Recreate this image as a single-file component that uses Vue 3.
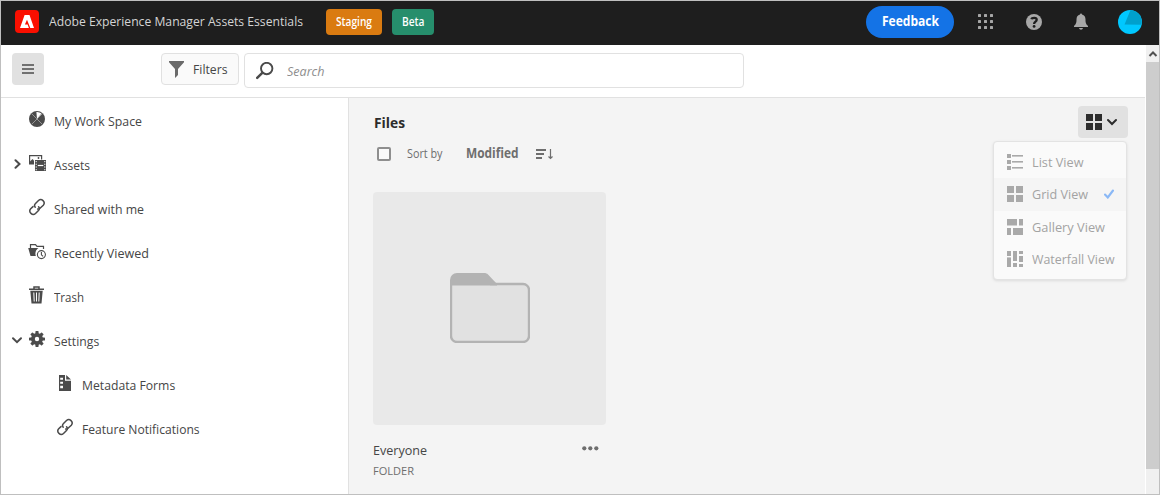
<script setup>
const nav = [
  { label: 'My Work Space', width: 88, icon: 'pie' },
  { label: 'Assets', width: 36, icon: 'assets', chevron: 'right' },
  { label: 'Shared with me', width: 90, icon: 'link' },
  { label: 'Recently Viewed', width: 95, icon: 'recent' },
  { label: 'Trash', width: 30, icon: 'trash' },
  { label: 'Settings', width: 45.2, icon: 'gear', chevron: 'down' },
  { label: 'Metadata Forms', width: 93.2, icon: 'form', child: true },
  { label: 'Feature Notifications', width: 117.6, icon: 'link', child: true },
]
const views = [
  { label: 'List View', width: 51.5, rects: [[0,0,4,4],[0,6,4,4],[0,12,4,4],[5,1,11,1.6],[5,7,11,1.6],[5,13,11,1.6]] },
  { label: 'Grid View', width: 56, rects: [[0,0,7,7],[9,0,7,7],[0,9,7,7],[9,9,7,7]], selected: true },
  { label: 'Gallery View', width: 73, rects: [[0,0,10,6.5],[12,0,4,6.5],[0,9,4,7],[6,9,10,7]] },
  { label: 'Waterfall View', width: 82.5, rects: [[0,0,4,5],[0,6.4,4,9.6],[6,0,4,10],[6,12,4,4],[12,0,4,3],[12,5,4,6],[12,13,4,3]] },
]
const dots = [0, 6, 12].flatMap(y => [0, 6, 12].map(x => [x, y]))
const teeth = [0, 45, 90, 135, 180, 225, 270, 315]

// Condenses a label horizontally so that it takes the given width.
const vFit = {
  mounted(el, { value }) {
    const natural = el.getBoundingClientRect().width
    el.style.display = 'inline-block'
    el.style.transformOrigin = '0 50%'
    el.style.transform = `scaleX(${value / natural})`
    el.style.marginRight = `${value - natural}px`
  },
}
</script>

<template>
  <div class="window">
    <header class="topbar">
      <svg class="logo" width="24" height="24" viewBox="0 0 24 24">
        <rect width="24" height="23" rx="4" fill="#fa0f00" />
        <path d="M9.600 5h4.900L19 18h-3.700L12 9.700 9.900 14.500h2.700L13.900 18H5z" fill="#fff" />
      </svg>
      <div class="product"><span v-fit="254">Adobe Experience Manager Assets Essentials</span></div>
      <div class="badge staging"><span v-fit="36">Staging</span></div>
      <div class="badge beta"><span v-fit="22.5">Beta</span></div>
      <button class="feedback"><span v-fit="57">Feedback</span></button>
      <svg class="apps" width="15" height="15"><rect v-for="(d, i) in dots" :key="i" :x="d[0]" :y="d[1]" width="3" height="3" rx=".5" fill="#a6a6a6" /></svg>
      <svg class="help" width="16" height="16" viewBox="0 0 16 16">
        <circle cx="8" cy="8" r="8" fill="#a8a8a8" />
        <path d="M5.500 5.300C5.900 3.500 10.700 3.100 10.700 5.800 10.700 7.700 8.100 7.700 8.100 10" fill="none" stroke="#1e1e1e" stroke-width="2.300" />
        <circle cx="8.100" cy="12.400" r="1.400" fill="#1e1e1e" />
      </svg>
      <svg class="bell" width="14" height="17" viewBox="0 0 14 17">
        <path d="M6 1.500a1 1 0 0 1 2 0C10.500 2 11.500 4 11.500 6.500c0 3.500.5 4.500 2.500 6.500v1H0v-1c2-2 2.500-3 2.500-6.500C2.500 4 3.500 2 6 1.500zM5 15h4c-.3 1-1 1.700-2 1.700S5.300 16 5 15z" fill="#a8a8a8" />
      </svg>
      <svg class="avatar" width="24" height="24" viewBox="0 0 24 24">
        <circle cx="12" cy="12" r="12" fill="#00c8ff" />
        <path d="M12.500 0A12 12 0 0 1 23.500 14.700L6.500 14.500z" fill="#00a0cc" />
      </svg>
    </header>

    <div class="body">
      <div class="page">
        <div class="toolbar">
          <button class="hamburger"><svg width="12" height="10"><path d="M0 1h12M0 5h12M0 9h12" stroke="#707070" stroke-width="1.800" /></svg></button>
          <button class="filters">
            <svg width="15" height="17" viewBox="0 0 15 17"><path d="M0 0h15v1.200L9 8v6l-3 3V8L0 1.200z" fill="#6a6a6a" /></svg>
            <span v-fit="34.5">Filters</span>
          </button>
          <div class="search">
            <svg width="18" height="18" viewBox="0 0 18 18"><g fill="none" stroke="#4a4a4a"><circle cx="10.700" cy="6.500" r="5.700" stroke-width="1.900" /><path d="M6.300 10.800 1.200 15.800" stroke-width="2.500" stroke-linecap="round" /></g></svg>
            <span v-fit="37.5">Search</span>
          </div>
        </div>

        <div class="columns">
          <nav class="sidebar">
            <div v-for="item in nav" :key="item.label" class="item" :class="{ child: item.child }">
              <div class="chevron">
                <svg v-if="item.chevron === 'right'" width="12" height="12"><path d="M4.500 1.200 8.500 5 4.500 8.800" fill="none" stroke="#4b4b4b" stroke-width="2" stroke-linecap="round" /></svg>
                <svg v-if="item.chevron === 'down'" width="12" height="12"><path d="M2 3.300 6 7.100 10 3.300" fill="none" stroke="#4b4b4b" stroke-width="2" stroke-linecap="round" /></svg>
              </div>
              <svg class="icon" width="18" height="18" viewBox="0 0 18 18">
                <template v-if="item.icon === 'pie'">
                  <circle cx="9" cy="9" r="8" fill="#4b4b4b" />
                  <path d="M9 9 8.400 2A7 7 0 0 1 13.500 3.500z" fill="#fff" />
                  <path d="M9 9 3.500 3.500M9 9 3.500 14.500M9 9l5.500 5.500M9 9l5.500-5.500" stroke="#aaa" stroke-width=".8" />
                </template>
                <template v-if="item.icon === 'assets'">
                  <path d="M1.600 10V1.600h12v4" fill="none" stroke="#4b4b4b" stroke-width="1.200" />
                  <path d="M1 10.500V8.500L4.500 5 6 6.500v4z" fill="#4b4b4b" /><circle cx="10.500" cy="4" r=".9" fill="#4b4b4b" />
                  <rect x="7" y="6" width="11" height="11" fill="#4b4b4b" />
                  <path d="M9.800 11.500h5.500" stroke="#fff" stroke-width="1.200" />
                  <path d="M8.200 7v10M16.800 7v10" stroke="#fff" stroke-width="1" stroke-dasharray="1.200 1.500" />
                </template>
                <g v-if="item.icon === 'link'" fill="none" stroke="#4b4b4b" stroke-width="1.500" stroke-linecap="round">
                  <path d="M7.200 9.200C6 7.700 6.500 6.500 7.500 5.500L10.500 2.500C13.500 -.2 18 4 15.300 7.200L12 10.300C11.200 11 10.500 11.200 9.700 11.100" />
                  <path d="M10.600 8.800C12 10.300 11.500 11.500 10.500 12.500L7.500 15.500C4.500 18.200 0 14 2.700 10.800L5 8.600" />
                </g>
                <template v-if="item.icon === 'recent'">
                  <path d="M2.500 6V2.600h5L9 4.400h6.500V7" fill="none" stroke="#4b4b4b" stroke-width="1.200" />
                  <path d="M.2 6h10.300C7.500 8 7 11 7.800 14H2.500z" fill="#4b4b4b" />
                  <circle cx="13.400" cy="12.600" r="4" fill="none" stroke="#4b4b4b" stroke-width="1.100" /><path d="M13.400 10v2.800l1.700 1.600" fill="none" stroke="#4b4b4b" stroke-width="1.100" />
                </template>
                <template v-if="item.icon === 'trash'">
                  <path d="M6 2.500V.9h5v1.600M1 3.200h15" fill="none" stroke="#4b4b4b" stroke-width="1.500" /><path d="M2.300 4.700h12.400L13.500 17.500h-10z" fill="#4b4b4b" />
                  <path d="M5.800 6.500l.4 9M8.500 6.500v9M11.200 6.500l-.4 9" stroke="#fff" stroke-width="1" />
                </template>
                <template v-if="item.icon === 'gear'">
                  <rect v-for="t in teeth" :key="t" x="7.400" y="1" width="3.200" height="4" rx=".7" fill="#4b4b4b" :transform="`rotate(${t} 9 9)`" />
                  <circle cx="9" cy="9" r="4.100" fill="none" stroke="#4b4b4b" stroke-width="3.800" />
                </template>
                <template v-if="item.icon === 'form'">
                  <path d="M3 1h6v5.700h6V17H3zM10.200 1 15 5.500h-4.800z" fill="#4b4b4b" />
                  <path d="M4.200 3.700h2.800v2H4.200zM4.200 7.700h2.800v2H4.200zM4.200 11.700h2.800v2.500H4.200z" fill="#fff" />
                </template>
              </svg>
              <span v-fit="item.width">{{ item.label }}</span>
            </div>
          </nav>

          <main class="content">
            <div class="heading">
              <h1><span v-fit="31">Files</span></h1>
              <div class="switcher">
                <button class="view-button">
                  <svg width="16" height="16"><path d="M0 0h7v7H0zM9 0h7v7H9zM0 9h7v7H0zM9 9h7v7H9z" fill="#2c2c2c" /></svg>
                  <svg width="10" height="8"><path d="M1 2 5 6 9 2" fill="none" stroke="#2c2c2c" stroke-width="2" stroke-linecap="round" /></svg>
                </button>
                <div class="menu">
                  <div v-for="v in views" :key="v.label" class="option" :class="{ selected: v.selected }">
                    <svg width="16" height="16"><rect v-for="(r, i) in v.rects" :key="i" :x="r[0]" :y="r[1]" :width="r[2]" :height="r[3]" fill="#a9a9a9" /></svg>
                    <span v-fit="v.width">{{ v.label }}</span>
                    <svg v-if="v.selected" class="check" width="10" height="10"><path d="M1 5.500 3.800 8.500 9 1.500" fill="none" stroke="#8ab8f6" stroke-width="2.100" stroke-linecap="round" /></svg>
                  </div>
                </div>
              </div>
            </div>
            <div class="sort">
              <div class="box"></div>
              <div class="sort-by"><span v-fit="35.5">Sort by</span></div>
              <div class="modified"><span v-fit="52.5">Modified</span></div>
              <svg width="17" height="12"><path d="M0 2h10M0 6h8M0 10h6" stroke="#6e6e6e" stroke-width="2" /><path d="M14.500 1v9M12.500 8.500l2 2L16.500 8.500" fill="none" stroke="#6e6e6e" stroke-width="1.200" /></svg>
            </div>
            <article class="card">
              <div class="thumb">
                <svg width="80" height="70" viewBox="0 0 80 70">
                  <path d="M1 12h73a5 5 0 0 1 5 5v46a6 6 0 0 1-6 6H7a6 6 0 0 1-6-6z" fill="#e1e1e1" />
                  <path d="M40 11h33a6 6 0 0 1 6 6v46a6 6 0 0 1-6 6H7a6 6 0 0 1-6-6V10" fill="none" stroke="#b3b3b3" stroke-width="2.400" />
                  <path d="M0 12.500V7a7 7 0 0 1 7-7h27c2 0 3 .5 4 1.500L47 11v1.500z" fill="#b3b3b3" />
                </svg>
              </div>
              <div class="caption">
                <div>
                  <div class="name"><span v-fit="54">Everyone</span></div>
                  <div class="kind"><span v-fit="41">FOLDER</span></div>
                </div>
                <svg width="17" height="5"><circle cx="2.300" cy="2.300" r="2.100" fill="#6e6e6e" /><circle cx="8.300" cy="2.300" r="2.100" fill="#6e6e6e" /><circle cx="14.300" cy="2.300" r="2.100" fill="#6e6e6e" /></svg>
              </div>
            </article>
          </main>
        </div>
      </div>
      <div class="scrollbar">
        <svg width="13" height="17"><path d="M3.500 11 7 7.500l3.500 3.500" fill="none" stroke="#505050" stroke-width="2" /></svg>
        <div class="scroll-thumb"></div>
      </div>
    </div>
  </div>
</template>

<style>
body { overflow: hidden; }
</style>

<style scoped>
* { box-sizing: border-box; }
svg { display: block; flex: none; }
button { padding: 0; border: 0; font: inherit; color: inherit; }
span { white-space: nowrap; flex: none; }
.window { width: 1160px; height: 495px; border: 1px solid #bfbfbf; display: flex; flex-direction: column; overflow: hidden; font: 500 13.500px/20px "Open Sans", "Noto Sans", sans-serif; color: #464646; background: #fff; }
.topbar { height: 44px; flex: none; display: flex; align-items: center; background: #1e1e1e; padding: 0 17px 3px 14px; }
.product { margin-left: 10px; width: 277px; flex: none; color: #d4d4d4; padding-bottom: 2px; }
.badge { height: 26px; border-radius: 4px; color: #fff; font-size: 12px; font-weight: 600; display: flex; align-items: center; justify-content: center; }
.staging { width: 56px; background: #da7b11; }
.beta { width: 42px; margin-left: 10px; background: #268e6c; }
.feedback { width: 88px; height: 32px; margin-left: auto; border-radius: 16px; background: #1473e6; color: #fff; font-size: 14px; font-weight: 700; padding-bottom: 1px; }
.apps { margin-left: 24px; }
.help { margin-left: 33px; }
.bell { margin-left: 32px; }
.avatar { margin-left: 30px; }
.body { flex: 1; min-height: 0; display: flex; }
.page { width: 1144px; display: flex; flex-direction: column; }
.toolbar { height: 53px; flex: none; border-bottom: 1px solid #e1e1e1; display: flex; align-items: flex-start; padding: 8px 0 0 11px; }
.hamburger { width: 32px; height: 32px; border-radius: 4px; background: #e1e1e1; display: flex; align-items: center; justify-content: center; }
.filters { width: 78px; height: 32px; margin-left: 117px; border: 1px solid #e1e1e1; border-radius: 4px; background: #fafafa; display: flex; align-items: center; padding-left: 7px; gap: 9px; }
.search { width: 500px; height: 35px; margin-left: 5px; border: 1px solid #e1e1e1; border-radius: 4px; display: flex; align-items: center; padding-left: 11px; gap: 13px; font-style: italic; color: #8e8e8e; }
.columns { flex: 1; min-height: 0; display: flex; }
.sidebar { width: 348px; border-right: 1px solid #e1e1e1; padding-top: 1px; }
.item { height: 44px; display: flex; align-items: center; padding-left: 10px; }
.item.child { padding-left: 38px; }
.chevron { width: 12px; }
.icon { margin: 0 8px 4px 5px; }
.content { flex: 1; background: #f4f4f4; padding: 8px 17px 0 25px; }
.heading { height: 32px; display: flex; justify-content: space-between; }
h1 { margin: 7px 0 0 0; font-size: 14.500px; line-height: 20px; color: #2c2c2c; }
.switcher { position: relative; }
.view-button { width: 50px; height: 32px; border-radius: 4px; background: #e1e1e1; display: flex; align-items: center; padding-left: 8px; gap: 5px; }
.menu { position: absolute; right: 1px; top: 35px; width: 134px; height: 139px; border: 1px solid #e3e3e3; border-radius: 4px; padding: 4px 0; background: #fafafa; box-shadow: 0 1px 3px #0000001a; color: #a3a3a3; }
.option { height: 32.300px; display: flex; align-items: center; padding-left: 13px; gap: 9px; }
.option.selected { background: #f5f5f5; }
.check { position: absolute; right: 12px; }
.sort { display: flex; align-items: center; height: 20px; margin-top: 6px; color: #6e6e6e; }
.box { width: 14px; height: 14px; margin-left: 3px; border: 2px solid #8e8e8e; border-radius: 2px; background: #fafafa; }
.sort-by { width: 59px; margin-left: 16px; font-size: 12px; }
.modified { width: 70px; font-size: 14px; font-weight: 700; padding-bottom: 2px; }
.card { width: 233px; margin: 28px 0 0 -1px; }
.thumb { height: 233px; border-radius: 4px; background: #e9e9e9; display: flex; align-items: center; justify-content: center; padding-bottom: 1px; }
.caption { display: flex; justify-content: space-between; padding: 15px 7px 0 0; }
.caption > svg { margin-top: 6px; }
.name { height: 21px; }
.kind { font-size: 11.500px; font-weight: 400; color: #6e6e6e; }
.scrollbar { width: 13px; margin-left: 1px; background: #f0f0f0; }
.scroll-thumb { height: 407px; background: #cdcdcd; }
</style>
